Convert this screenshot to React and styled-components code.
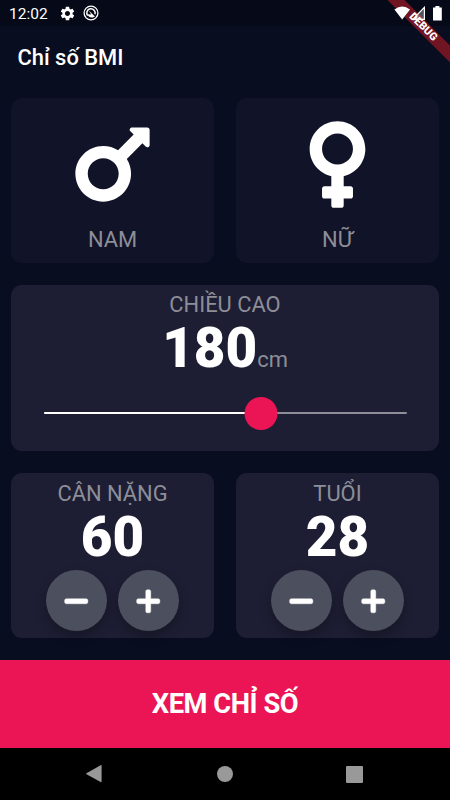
import React, { useState } from "react";
import styled, { createGlobalStyle } from "styled-components";
import { FaMars, FaVenus, FaMinus, FaPlus } from "react-icons/fa";
import { MdSettings } from "react-icons/md";

const App = () => {
  const [height, setHeight] = useState(180);
  const [weight, setWeight] = useState(60);
  const [age, setAge] = useState(28);

  // thanh trượt: 120cm - 220cm
  const percent = ((height - 120) / 100) * 100;

  const slideHandle = (e) => {
    const box = e.currentTarget.getBoundingClientRect();
    setHeight(Math.round(120 + ((e.clientX - box.left) / box.width) * 100));
  }

  return (
    <>
      <GlobalStyle />
      <Screen>
        <StatusBar>
          <Clock>12:02</Clock>
          <MdSettings size={17} />
          <SyncIcon />
          <Signals />
        </StatusBar>
        <AppBar>Chỉ số BMI</AppBar>
        <Body>
          <Row>
            <GenderCard>
              <FaMars />
              <Label>NAM</Label>
            </GenderCard>
            <GenderCard>
              <FaVenus />
              <Label>NỮ</Label>
            </GenderCard>
          </Row>
          <Row>
            <Card>
              <Label>CHIỀU CAO</Label>
              <HeightValue>
                <Number>{height}</Number>
                <Label>cm</Label>
              </HeightValue>
              <Slider onClick={slideHandle}>
                <Track>
                  <Filled style={{ width: `${percent}%` }} />
                </Track>
                <Thumb style={{ left: `${percent}%` }} />
              </Slider>
            </Card>
          </Row>
          <Row>
            <Counter label="CÂN NẶNG" value={weight} onChange={setWeight} />
            <Counter label="TUỔI" value={age} onChange={setAge} />
          </Row>
        </Body>
        <ResultButton>XEM CHỈ SỐ</ResultButton>
        <NavBar>
          <svg width="18" height="20" viewBox="0 0 18 20">
            <path d="M1.5 9.3 15.6 1.2Q16.6.8 16.6 1.8V17.6Q16.6 18.6 15.6 18.1L1.5 10.3Q.6 9.8 1.5 9.3Z" fill="#999" />
          </svg>
          <Home />
          <Recent />
        </NavBar>
        <DebugBanner>
          <span>DEBUG</span>
        </DebugBanner>
      </Screen>
    </>
  );
};
export default App;

const Counter = ({ label, value, onChange }) => {
  return (
    <CounterCard>
      <Label>{label}</Label>
      <Number>{value}</Number>
      <Buttons>
        <RoundButton onClick={() => onChange(value - 1)}>
          <FaMinus />
        </RoundButton>
        <RoundButton onClick={() => onChange(value + 1)}>
          <FaPlus />
        </RoundButton>
      </Buttons>
    </CounterCard>
  );
};

const SyncIcon = () => (
  <SyncSvg width="16" height="16" viewBox="0 0 16 16" fill="none" stroke="#fff">
    <circle cx="8" cy="8" r="6.9" strokeWidth="1.3" />
    <path d="M4.7 10.6A4.2 4.2 0 1 1 12 9.2" strokeWidth="1.5" />
    <path d="M5.6 5.6 12 11.4 9.6 12.4A4.6 4.6 0 0 1 4.6 9.2L8.2 9.4Z" fill="#fff" stroke="none" />
  </SyncSvg>
);

const Signals = () => (
  <SignalIcons width="50" height="16" viewBox="0 0 50 16">
    <path d="M.4 3.6Q8.2-2.4 16 3.6L8.2 13.4Z" fill="#fff" />
    <path d="M31 0V14H17.4Z" fill="#fff" fillOpacity=".3" />
    <path d="M30.4 1.4V13.4H18.7Z" fill="none" stroke="#fff" strokeWidth="1.2" />
    <path d="M39 1.4H41.4V0H45.4V1.4H47.8V14.4H39Z" fill="#fff" />
  </SignalIcons>
);

const GlobalStyle = createGlobalStyle`
  body {
    margin: 0;
    background: #000;
    font-family: Roboto, "Noto Sans", sans-serif;
  }
  * {
    box-sizing: border-box;
  }
  button {
    font-family: inherit;
    border: 0;
    padding: 0;
    color: #fff;
    cursor: pointer;
  }
`
const Screen = styled.div`
  position: relative;
  display: flex;
  flex-direction: column;
  width: 450px;
  height: 800px;
  overflow: hidden;
  background-color: #090d20;
  color: #fff;
`
const StatusBar = styled.div`
  display: flex;
  align-items: center;
  height: 26px;
  padding: 0 6px 0 9px;
  background-color: #060917;
  svg {
    position: relative;
    z-index: 2;
  }
`
const Clock = styled.div`
  width: 49.5px;
  font-size: 15.5px;
  line-height: 26px;
  margin-top: 2px;
`
const SyncSvg = styled.svg`
  margin-left: 7.5px;
`
const SignalIcons = styled.svg`
  margin-left: auto;
  margin-top: 1px;
`
const AppBar = styled.div`
  height: 61px;
  padding-left: 17.5px;
  font-size: 21.9px;
  font-weight: 500;
  line-height: 64px;
`
const Body = styled.div`
  display: flex;
  flex-direction: column;
  height: 562px;
`
const Row = styled.div`
  display: flex;
  flex: 1;
`
const Card = styled.div`
  display: flex;
  flex-direction: column;
  flex: 1;
  align-items: center;
  margin: 11px;
  padding-top: 6.5px;
  border-radius: 11px;
  background-color: #1d1e33;
`
const CounterCard = styled(Card)`
  padding-top: 8.5px;
`
const GenderCard = styled(Card)`
  padding-top: 17px;
  background-color: #111328;
  svg {
    width: auto;
    height: 99px;
    margin-bottom: 13px;
  }
`
const Label = styled.div`
  font-size: 21.9px;
  line-height: 26px;
  color: #8d8e98;
`
const Number = styled.div`
  font-size: 54.7px;
  font-weight: 900;
  line-height: 61px;
`
const HeightValue = styled.div`
  display: flex;
  align-items: baseline;
`
const Slider = styled.div`
  position: relative;
  display: flex;
  align-items: center;
  width: 363px;
  height: 34px;
  margin-top: 17.5px;
`
const Track = styled.div`
  width: 100%;
  height: 2px;
  border-radius: 1px;
  background-color: #8d8e98;
`
const Filled = styled.div`
  height: 2px;
  border-radius: 1px;
  background-color: #fff;
`
const Thumb = styled.div`
  position: absolute;
  width: 33px;
  height: 33px;
  border-radius: 50%;
  background-color: #eb1555;
  transform: translateX(-50%);
`
const Buttons = styled.div`
  display: flex;
  gap: 11px;
  margin-top: 1.5px;
`
const RoundButton = styled.button`
  display: flex;
  align-items: center;
  justify-content: center;
  width: 61px;
  height: 61px;
  padding-top: 2px;
  border-radius: 50%;
  background-color: #4c4f5e;
  box-shadow: 0 6px 11px rgba(0, 0, 0, 0.25);
  font-size: 26.5px;
  svg {
    stroke: #fff;
    stroke-width: 8px;
  }
`
const ResultButton = styled.button`
  height: 88px;
  margin-top: 11px;
  background-color: #eb1555;
  font-size: 27.3px;
  font-weight: 700;
  letter-spacing: -0.45px;
`
const NavBar = styled.div`
  display: flex;
  flex: 1;
  align-items: center;
  justify-content: space-between;
  padding: 0 87px 0 85px;
  background-color: #000;
`
const Home = styled.div`
  width: 16px;
  height: 16px;
  border-radius: 50%;
  background-color: #999;
`
const Recent = styled.div`
  width: 17px;
  height: 17px;
  border-radius: 1px;
  background-color: #999;
`
const DebugBanner = styled.div`
  position: absolute;
  top: 21px;
  right: -33px;
  width: 120px;
  height: 12px;
  background-color: #721522;
  font-size: 10.8px;
  font-weight: 900;
  line-height: 12px;
  text-align: center;
  transform: rotate(45deg);
  z-index: 1;
`
